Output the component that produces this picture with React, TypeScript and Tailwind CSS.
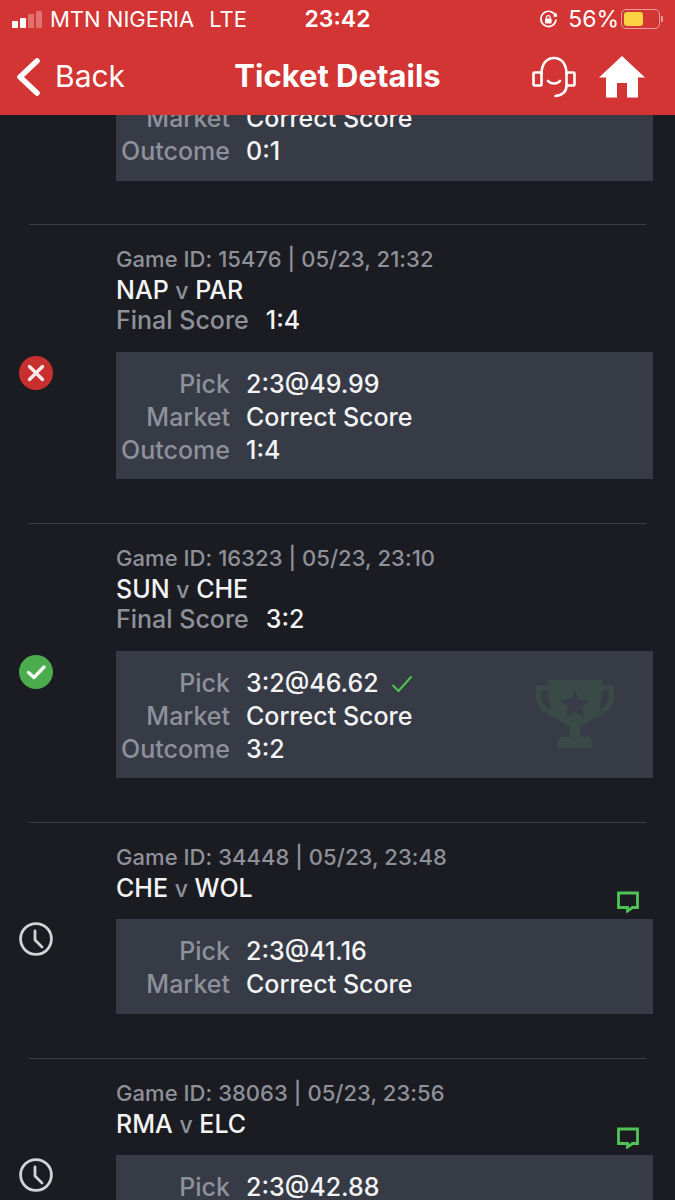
import React from "react";

type Status = "lost" | "won" | "pending";

type Game = {
  id: string;
  date: string;
  home: string;
  away: string;
  finalScore?: string;
  pick: string;
  outcome?: string;
  status: Status;
  live?: boolean;
};

const games: Game[] = [
  { id: "15476", date: "05/23, 21:32", home: "NAP", away: "PAR", finalScore: "1:4", pick: "2:3@49.99", outcome: "1:4", status: "lost" },
  { id: "16323", date: "05/23, 23:10", home: "SUN", away: "CHE", finalScore: "3:2", pick: "3:2@46.62", outcome: "3:2", status: "won" },
  { id: "34448", date: "05/23, 23:48", home: "CHE", away: "WOL", pick: "2:3@41.16", status: "pending", live: true },
  { id: "38063", date: "05/23, 23:56", home: "RMA", away: "ELC", pick: "2:3@42.88", status: "pending", live: true },
];

const SignalBars = () => (
  <div className="flex items-end gap-[2px] h-[17px]">
    <span className="w-[6px] h-[7px] rounded-[1px] bg-white" />
    <span className="w-[6px] h-[10px] rounded-[1px] bg-white" />
    <span className="w-[6px] h-[14px] rounded-[1px] bg-white/30" />
    <span className="w-[6px] h-[17px] rounded-[1px] bg-white/30" />
  </div>
);

const RotationLock = () => (
  <svg width="19" height="19" viewBox="0 0 19 19" fill="none">
    <path d="M16.6 6.2A7.6 7.6 0 1 0 17 10" stroke="white" strokeWidth="1.7" strokeLinecap="round" />
    <path d="M14 6.4h4.4L17.2 2.4z" fill="white" />
    <rect x="6" y="8.6" width="6.6" height="5" rx="1" fill="white" />
    <path d="M7.4 8.8V7.6a1.9 1.9 0 0 1 3.8 0v1.2" stroke="white" strokeWidth="1.2" />
  </svg>
);

const Battery = () => (
  <div className="flex items-center gap-[1px]">
    <div className="w-[39px] h-[20px] rounded-[5px] border border-white/50 p-[2px]">
      <div className="w-[19px] h-full rounded-[3px] bg-[#fbd242]" />
    </div>
    <span className="w-[2px] h-[6px] rounded-r-[1px] bg-white/50" />
  </div>
);

const HeadsetIcon = () => (
  <svg width="44" height="42" viewBox="0 0 44 42" fill="none" stroke="white" strokeWidth="2.6" strokeLinecap="round">
    <rect x="1.5" y="16.5" width="8" height="13" rx="1" />
    <rect x="34.5" y="16.5" width="8" height="13" rx="1" />
    <path d="M9.5 18C9.5 8 14.5 2 22 2s12.500 6 12.500 16" />
    <path d="M16 25c3 3.400 9 3.400 12 0" />
    <path d="M34.500 29.500c0 6.500-3.500 9.500-11 10.500" />
  </svg>
);

const HomeIcon = () => (
  <svg width="46" height="42" viewBox="0 0 46 42" fill="white">
    <path d="M23 0 46 21.500H39V41.500H28V27H18V41.500H7V21.500H0z" />
  </svg>
);

const StatusIcon = ({ status }: { status: Status }) => {
  if (status === "lost") {
    return (
      <svg width="34" height="34" viewBox="0 0 34 34" fill="none">
        <circle cx="17" cy="17" r="17" fill="#c8302f" />
        <path d="M10.500 10.500l13 13M23.500 10.500l-13 13" stroke="#fbe9e9" strokeWidth="3.400" strokeLinecap="round" />
      </svg>
    );
  }
  if (status === "won") {
    return (
      <svg width="34" height="34" viewBox="0 0 34 34" fill="none">
        <circle cx="17" cy="17" r="17" fill="#4bab4f" />
        <path d="M9.500 17.500l5.500 5L25 12" stroke="#f1faf0" strokeWidth="3.400" strokeLinecap="round" strokeLinejoin="round" />
      </svg>
    );
  }
  return (
    <svg width="34" height="34" viewBox="0 0 34 34" fill="none" stroke="#d2d3d5" strokeWidth="2.800" strokeLinecap="round" strokeLinejoin="round">
      <circle cx="17" cy="17" r="15.400" />
      <path d="M16 9v9l7 7" />
    </svg>
  );
};

const ChatIcon = () => (
  <svg width="22" height="22" viewBox="0 0 22 22" fill="none">
    <path d="M1.500 2h19v14.500h-5L10.500 20v-3.500h-9z" stroke="#4fc455" strokeWidth="2.800" />
  </svg>
);

const Trophy = () => (
  <svg width="80" height="70" viewBox="2 0 76 68" className="shrink-0">
    <path
      d="M14 1h52v5h12v10c0 11-9 20-22 23-3 3-8 6-11 7v10h10l2 6v5H23v-5l2-6h10V46c-3-1-8-4-11-7C11 36 2 27 2 16V6h12zM7 11v5c0 6 4 11 10 14-2-5-3-12-3-19zm66 0h-7c0 7-1 14-3 19 6-3 10-8 10-14z"
      fill="#3a4a46"
      fillRule="evenodd"
    />
    <path d="M40 11l4.200 9 10 1-7.500 6.500 2.300 10-9-5.500-9 5.500 2.300-10-7.500-6.500 10-1z" fill="#393c48" />
  </svg>
);

const PickLine = ({ label, value, children }: { label: string; value: string; children?: React.ReactNode }) => (
  <div className="flex items-center h-[33px]">
    <span className="w-[114px] text-right text-[#8e919a]">{label}</span>
    <span className="ml-[16px] text-[#f4f4f5]">{value}</span>
    {children}
  </div>
);

const GameRow = ({ game }: { game: Game }) => (
  <div className="shrink-0">
    <div className="h-px mx-[29px] bg-[#3c3d43]" />
    <div className="flex items-center ml-[19px]">
      <div className="w-[34px] shrink-0 mb-[3px]">
        <StatusIcon status={game.status} />
      </div>
      <div className="flex-1 ml-[63px] mr-[22px] pt-[18px] pb-[44px]">
        <div className="h-[31px] leading-[33px] text-[22px] tracking-[0.05px] text-[#8e919a]">
          Game ID: {game.id} | {game.date}
        </div>
        <div className="relative h-[31px] leading-[33px] text-[#f4f4f5]">
          {game.home} <span className="text-[#8e919a] text-[23px]">v</span> {game.away}
          {game.live && (
            <span className="absolute right-[14px] top-[19px]">
              <ChatIcon />
            </span>
          )}
        </div>
        {game.finalScore && (
          <div className="h-[31px] leading-[31px]">
            <span className="text-[#8e919a]">Final Score</span>
            <span className="ml-[17px] text-[#f4f4f5]">{game.finalScore}</span>
          </div>
        )}
        <div className={`${game.finalScore ? "pb-[12px]" : "pb-[13px]"} relative mt-[16px] pt-[16px] bg-[#373b46]`}>
          <PickLine label="Pick" value={game.pick}>
            {game.status === "won" && (
              <svg width="22" height="18" viewBox="0 0 22 18" fill="none" className="ml-[12px]">
                <path d="M1.500 10l6 6L20.500 1.500" stroke="#4fc455" strokeWidth="2" />
              </svg>
            )}
          </PickLine>
          <PickLine label="Market" value="Correct Score" />
          {game.outcome && <PickLine label="Outcome" value={game.outcome} />}
          {game.status === "won" && (
            <div className="absolute right-[38px] top-[28px]">
              <Trophy />
            </div>
          )}
        </div>
      </div>
    </div>
  </div>
);

export default function App() {
  return (
    <div className="w-[675px] h-[1200px] flex flex-col overflow-hidden bg-[#1b1c22] text-[25px] font-medium font-['Inter',sans-serif]">
      <header className="relative z-10 h-[115px] shrink-0 bg-[#d33434] text-white">
        <div className="grid grid-cols-[1fr_auto_1fr] items-center h-[38px] px-[12px]">
          <div className="flex items-center text-[22px] font-normal">
            <SignalBars />
            <span className="ml-[8px]">MTN NIGERIA</span>
            <span className="ml-[15px]">LTE</span>
          </div>
          <span className="text-[23px] font-semibold">23:42</span>
          <div className="flex items-center justify-end text-[23px] font-normal">
            <RotationLock />
            <span className="ml-[10px]">56%</span>
            <span className="ml-[2px]">
              <Battery />
            </span>
          </div>
        </div>
        <div className="grid grid-cols-[1fr_auto_1fr] items-center h-[77px] px-[16px]">
          <div className="flex items-center">
            <svg width="24" height="38" viewBox="0 0 24 38" fill="none">
              <path d="M21 3 4 19l17 16" stroke="white" strokeWidth="5.500" strokeLinecap="round" strokeLinejoin="round" />
            </svg>
            <span className="ml-[15px] text-[30px] font-normal">Back</span>
          </div>
          <span className="text-[31px] font-bold">Ticket Details</span>
          <div className="flex items-center justify-end gap-[23px] mr-[14px]">
            <HeadsetIcon />
            <HomeIcon />
          </div>
        </div>
      </header>

      <main className="flex-1 min-h-0 overflow-hidden flex flex-col">
        <div className="shrink-0 ml-[116px] mr-[22px] -mt-[13px] mb-[43px] pb-[13px] bg-[#373b46]">
          <PickLine label="Market" value="Correct Score" />
          <PickLine label="Outcome" value="0:1" />
        </div>
        {games.map((game) => (
          <GameRow key={game.id} game={game} />
        ))}
      </main>
    </div>
  );
}
